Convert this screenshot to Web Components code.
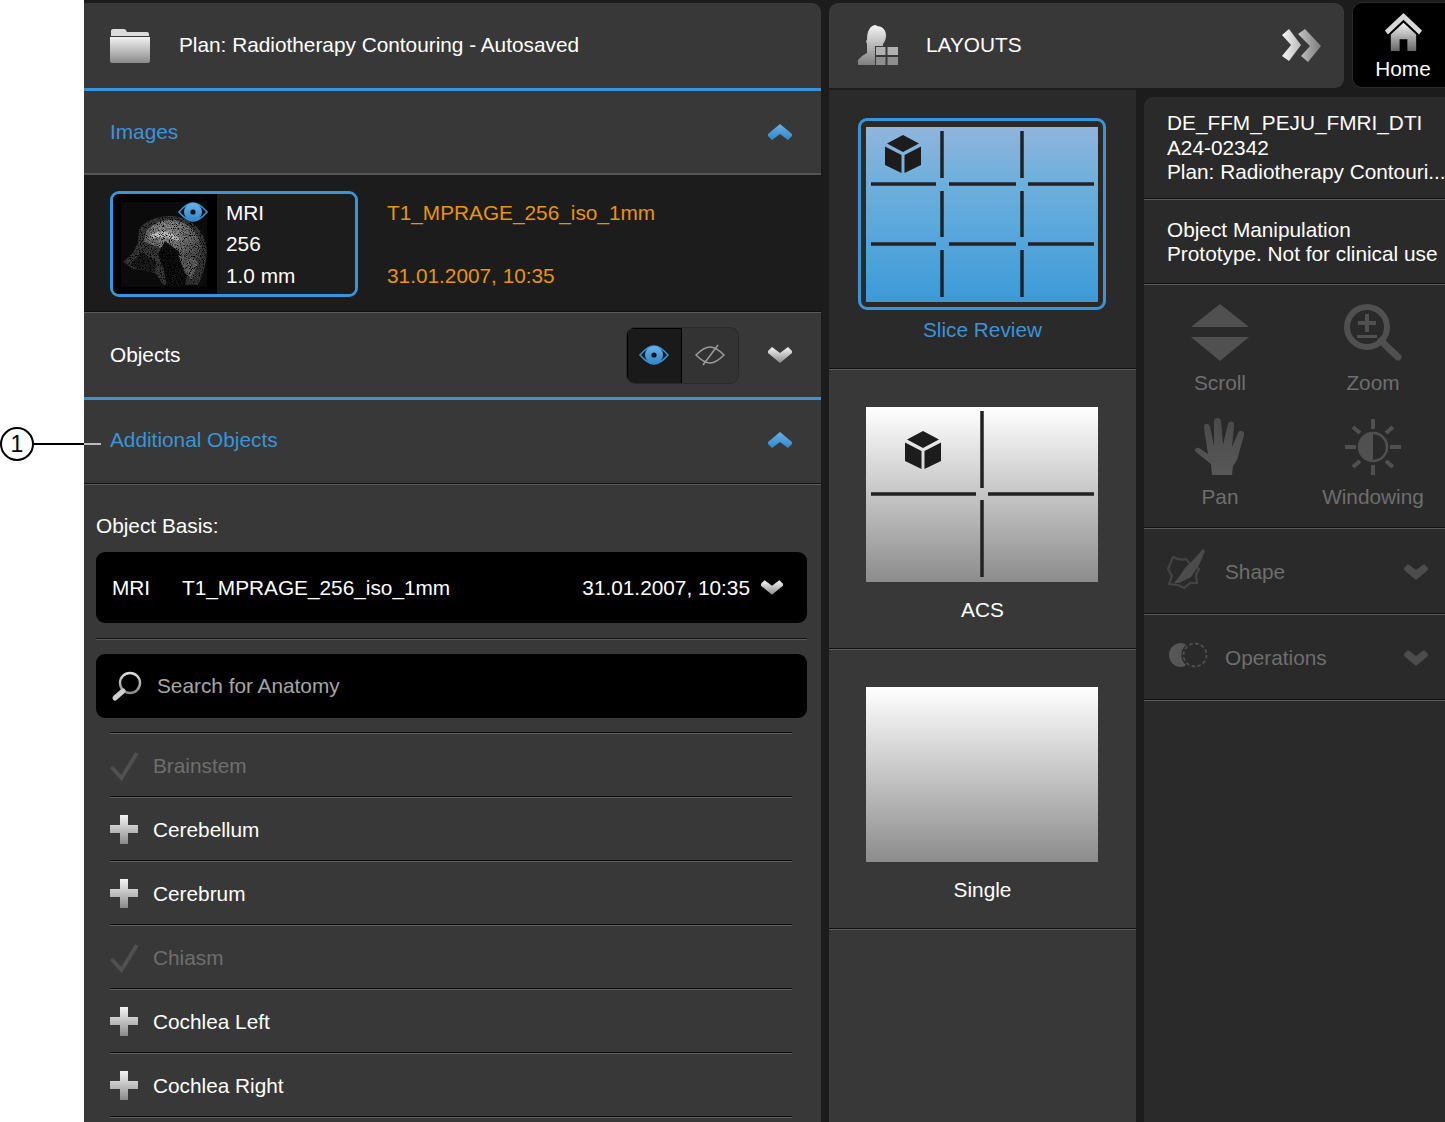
<!DOCTYPE html>
<html><head><meta charset="utf-8">
<style>
html,body{margin:0;padding:0;background:#fff;height:1122px;overflow:hidden}
body{font:20.8px/24px "Liberation Sans",Arial,sans-serif;color:#fff}
</style></head><body>
<app-shell></app-shell>
<script>
const GRAD=(id,a,b,v=true)=>`<linearGradient id="${id}" x1="0" y1="0" x2="${v?0:1}" y2="${v?1:0}"><stop offset="0" stop-color="${a}"/><stop offset="1" stop-color="${b}"/></linearGradient>`;
const ICONS={
folder:[40,36,`<defs>${GRAD('g','#f2f2f2','#8a8a8a')}</defs><path d="M1 7V3q0-2 2-2h11q2 0 3 3h20q2 0 2 2v2H1z" fill="#dcdcdc"/><path d="M0 9h40v24q0 2-2 2H2q-2 0-2-2z" fill="url(#g)"/>`],
person:[41,40,`<defs>${GRAD('g','#f4f4f4','#7e7e7e')}</defs><path d="M18.500 0c6 0 9.500 4 9.500 9.500 0 3-1 6-3 8.500v2h-8v19H0v-5l4-4 5-3v-9l-1-3 1-1c0-9 3-15 9.500-15z" fill="url(#g)"/><path fill="#b0b0b0" d="M18 21h9.500v8H18zM29.500 21H40v8H29.500z"/><path fill="#8e8e8e" d="M18 31h9.500v8H18zM29.500 31H40v8H29.500z"/>`],
dbl:[40,33,`<defs>${GRAD('g','#f6f6f6','#7c7c7c',false)}</defs><path fill="url(#g)" d="M0 6l7-6 12 16-12 16-7-5 9-11zM16 5l7-5 16 17-13 16-7-6 9-10z"/>`],
home:[40,40,`<defs>${GRAD('g','#f4f4f4','#666')}</defs><path fill="#d8d8d8" d="M20 0l19 18-3 4L20 7 4 22l-3-4z"/><path fill="url(#g)" d="M20 10l13 12v17H24V27h-8v12H7V22z"/>`],
up:[24,16,`<defs>${GRAD('g','#6aaee4','#2f8acb')}</defs><path fill="url(#g)" d="M12 0l12 10v2l-4 4-8-6-8 6-4-4v-2z"/>`],
down:[24,16,`<defs>${GRAD('g','#f6f6f6','#8a8a8a')}</defs><path fill="url(#g)" d="M12 16L0 6V4l4-4 8 6 8-6 4 4v2z"/>`],
downdim:[24,16,`<path fill="#4c4c4c" d="M12 16L0 6V4l4-4 8 6 8-6 4 4v2z"/>`],
eye:[30,20,`<defs>${GRAD('g','#69b2ea','#2f86c8')}</defs><path d="M1 10C7 3 11 1 15 1s8 2 14 9c-6 7-10 9-14 9S7 17 1 10z" fill="none" stroke="#3f92d2" stroke-width="1.6"/><circle cx="15" cy="10" r="9" fill="url(#g)"/><circle cx="15" cy="10" r="2.6" fill="#111"/>`],
eyeoff:[30,24,`<path d="M1 12c6-6 10-8 14-8s8 2 14 8c-6 6-10 8-14 8S7 18 1 12z" fill="none" stroke="#9a9a9a" stroke-width="1.5"/><path d="M8 22L23 2" stroke="#9a9a9a" stroke-width="1.5"/>`],
search:[30,30,`<defs>${GRAD('g','#dcdcdc','#8a8a8a')}</defs><circle cx="18" cy="12" r="10" fill="none" stroke="url(#g)" stroke-width="2.4"/><path d="M11 20L3 27" stroke="#cfcfcf" stroke-width="5" stroke-linecap="round"/>`],
check:[28,28,`<path d="M1.500 15l10 11L27 1" fill="none" stroke="#505050" stroke-width="4"/>`],
plus:[28,29,`<defs>${GRAD('g','#f4f4f4','#8a8a8a')}</defs><path fill="url(#g)" d="M10 0h8v10h10v8H18v11h-8V18H0v-8h10z"/>`],
scroll:[58,58,`<path fill="#505050" d="M29 0l29 23H0zM0 33h58L29 57z"/>`],
zoom:[58,58,`<circle cx="23" cy="23" r="20" fill="none" stroke="#505050" stroke-width="6"/><path d="M37 37l17 16" stroke="#505050" stroke-width="7" stroke-linecap="round"/><path fill="#505050" d="M21 10h4v7h7v4h-7v7h-4v-7h-7v-4h7zM13 31h20v3H13z"/>`],
hand:[50,58,`<defs>${GRAD('g','#4a4a4a','#585858')}</defs><path fill="url(#g)" d="M17 57L16 46 1 34C-1 32 1 29 4 30L13 36 9 10C8 5 14 4 15 9L19 28 19 3C19-1 26-1 26 3L28 27 33 6C34 2 40 3 39 7L37 29 43 15C45 11 50 13 49 17L42 42 38 48 37 57z"/>`],
sun:[58,58,`<circle cx="29" cy="29" r="14" fill="none" stroke="#505050" stroke-width="2.500"/><path fill="#505050" d="M29 15a14 14 0 0 0 0 28z"/><path d="M29 1v10M29 47v10M1 29h11M46 29h11M9 9l7 6M49 9l-7 6M9 49l7-6M49 49l-7-6" stroke="#505050" stroke-width="4"/>`],
shape:[40,40,`<path d="M6 8c5 3 9 3 13 2l5 6 8 4-3 6 1 8-7 0-6 5-6-3-9-1 3-8-4-7z" fill="none" stroke="#444" stroke-width="2.200"/><path d="M36 0l2 2-6 14-8 12-6 3c-2 1-6 4-11 3l5-6 6-9 11-11z" fill="#4c4c4c"/>`],
ops:[41,26,`<path d="M14 1a12 12 0 0 0 0 24c2 0 4-1 5-2a13 13 0 0 1 0-20c-1-1-3-2-5-2z" fill="#565656"/><circle cx="28" cy="13" r="11.500" fill="none" stroke="#505050" stroke-width="1.800" stroke-dasharray="3.500 2.500"/>`],
cube:[36,38,`<path fill="currentColor" d="M18 0l16 8.500-16 8.500L2 8.500zM0 11.500l16.500 8.500v18L0 30zM36 11.500L19.500 20v18L36 30z"/>`],
};
function el(name,render,obs=[]){customElements.define(name,class extends HTMLElement{
  connectedCallback(){if(this.shadowRoot)return;this.attachShadow({mode:'open'}).innerHTML=render(this)}
})}
const a=(t,n,d='')=>t.getAttribute(n)??d;

el('app-icon',t=>{const i=ICONS[a(t,'name')];const w=+a(t,'w',i[0]),h=+a(t,'h',i[1]);
return `<style>:host{display:inline-flex;flex:none;line-height:0}svg{display:block;overflow:visible}</style><svg width="${w}" height="${h}" viewBox="0 0 ${i[0]} ${i[1]}">${i[2]}</svg>`});

el('section-head',t=>`<style>
:host{display:flex;align-items:center;justify-content:space-between;box-sizing:border-box;padding:0 29px 0 26px;height:84px;background:#383838;border-bottom:2px solid #555}
:host([line=blue]){height:87px;border-bottom:3px solid #3a94d8}
:host([line=pair]){height:85px;padding-bottom:5px;border-bottom:1px solid #5a5a5a;box-shadow:inset 0 -1px 0 #141414}
:host([blue]) .t{color:#3a94d8}
.r{display:flex;align-items:center;gap:29px}
</style><span class="t"><slot name="title"></slot></span><span class="r"><slot></slot></span>`);

el('image-card',t=>`<style>
:host{display:flex;box-sizing:border-box;width:248px;height:106px;border:3px solid #3a94d8;border-radius:9px;overflow:hidden;flex:none}
.th{width:104px;background:#000;line-height:0;position:relative;flex:none}
.txt{padding-left:9px;display:flex;flex-direction:column;line-height:31.500px;padding-top:2.500px;background:#1c1c1c;flex:1}
app-icon{position:absolute;left:65px;top:8px}
</style><div class="th">
<svg width="104" height="100" viewBox="39 27 312 300"><defs>
<filter id="n" x="0" y="0" width="100%" height="100%"><feTurbulence type="fractalNoise" baseFrequency=".3" numOctaves="2" seed="4" result="t"/><feColorMatrix in="t" values="0 0 0 0 0 0 0 0 0 0 0 0 0 0 0 3.200 0 0 0 -1.250" result="sp"/><feComposite in="sp" in2="SourceGraphic" operator="in" result="m"/><feMerge><feMergeNode in="SourceGraphic"/><feMergeNode in="m"/></feMerge></filter>
<radialGradient id="b" cx=".4" cy=".3" r=".75"><stop offset="0" stop-color="#a0a0a0"/><stop offset="1" stop-color="#4c4c4c"/></radialGradient></defs>
<rect x="63" y="51" width="258" height="254" fill="#0b0b0b"/>
<g filter="url(#n)">
<path d="M210 92c50 2 95 30 108 85 6 40-6 90-24 122H190l-22-32-20-10-50-6-28-21 30-28 14-30 4-38c10-22 48-40 92-42z" fill="#3c3c3c"/>
<path d="M210 104c42 2 80 26 92 74 3 26-2 44-10 56l-44 8-26-30-40-22-50-20 6-30c14-20 42-34 72-36z" fill="url(#b)"/>
<path d="M150 150c30-18 70-10 90 14l-6 5c-24-14-54-17-80-9z" fill="#c8c8c8"/>
<path d="M195 168l40 30 30 60-10 42h-55l-12-58-14-35z" fill="#181818"/>
<path d="M235 212c20-4 50 4 58 24l-18 46-20-18z" fill="#666"/>
<path d="M125 200l45 30-10 35-40-10-30-15z" fill="#222"/></g>
</svg><app-icon name="eye"></app-icon></div><div class="txt"><slot></slot></div>`);

el('eye-toggle',t=>`<style>
:host{display:flex;width:113px;height:57px;border-radius:9px;overflow:hidden;box-sizing:border-box;border:1px solid #2a2a2a;background:#333}
div{flex:1;display:flex;align-items:center;justify-content:center}
.on{background:#1a1a1a;border-right:1px solid #000;flex:none;width:55px;box-shadow:inset 1px 1px 0 #000;padding-right:1px;box-sizing:border-box}
</style><div class="on"><app-icon name="eye"></app-icon></div><div><app-icon name="eyeoff"></app-icon></div>`);

el('black-bar',t=>`<style>
:host{display:flex;align-items:center;background:#000;border-radius:9px;box-sizing:border-box;margin:0 14px 0 12px}
</style><slot></slot>`);

el('anatomy-row',t=>{const off=t.hasAttribute('done');return `<style>
:host{display:flex;align-items:center;box-sizing:border-box;height:64px;margin:0 29px 0 26px;border-top:1px solid #0e0e0e;box-shadow:inset 0 1px 0 #5c5c5c;gap:15px;padding-top:2px}
span{color:${off?'#6e6e6e':'#fff'}}
app-icon{width:28px}
</style><app-icon name="${off?'check':'plus'}"></app-icon><span><slot></slot></span>`});

el('plan-panel',t=>`<style>
:host{display:block;background:#383838;border-radius:0 9px 0 0;overflow:hidden;height:1119px}
.hd{display:flex;align-items:center;box-sizing:border-box;height:88px;border-bottom:3px solid #3a94d8;padding-left:26px;gap:29px}
.hd span{transform:translateY(-1px)}
.imgs{display:flex;box-sizing:border-box;height:138px;background:#1c1c1c;padding:16px 0 0 26px;gap:29px;border-bottom:1px solid #5a5a5a;box-shadow:inset 0 -1px 0 #0c0c0c}
.meta{color:#e6950f;display:flex;flex-direction:column;justify-content:space-between;height:87px;padding-top:10px}
.basis{padding:29px 0 0 12px;height:38px;box-sizing:content-box}
.sep{height:1px;background:#111;border-bottom:1px solid #5a5a5a;margin:15px 14px 14px 12px}
.dd{height:71px;padding:0 24px 0 16px}
.dd .m{width:70px}.dd .n{flex:1}.dd .d{margin-right:11px}
.sr{height:64px;padding-left:16px;gap:15px;margin-bottom:14px;color:#a6a6a6}
</style>
<div class="hd"><app-icon name="folder"></app-icon><span>Plan: Radiotherapy Contouring - Autosaved</span></div>
<section-head blue><span slot="title">Images</span><app-icon name="up"></app-icon></section-head>
<div class="imgs"><image-card><span>MRI</span><span>256</span><span>1.0 mm</span></image-card>
<div class="meta"><span>T1_MPRAGE_256_iso_1mm</span><span>31.01.2007, 10:35</span></div></div>
<section-head line="blue"><span slot="title">Objects</span><eye-toggle></eye-toggle><app-icon name="down"></app-icon></section-head>
<section-head blue line="pair"><span slot="title">Additional Objects</span><app-icon name="up"></app-icon></section-head>
<div class="basis">Object Basis:</div>
<black-bar class="dd"><span class="m">MRI</span><span class="n">T1_MPRAGE_256_iso_1mm</span><span class="d">31.01.2007, 10:35</span><app-icon name="down" w="22" h="15"></app-icon></black-bar>
<div class="sep"></div>
<black-bar class="sr"><app-icon name="search"></app-icon><span>Search for Anatomy</span></black-bar>
<anatomy-row done>Brainstem</anatomy-row>
<anatomy-row>Cerebellum</anatomy-row>
<anatomy-row>Cerebrum</anatomy-row>
<anatomy-row done>Chiasm</anatomy-row>
<anatomy-row>Cochlea Left</anatomy-row>
<anatomy-row>Cochlea Right</anatomy-row>
<anatomy-row></anatomy-row>`);

const segs=(xs,ys)=>xs.map(x=>`M${x[0]} ${x[1]}H${x[2]}`).concat(ys.map(y=>`M${y[0]} ${y[1]}V${y[2]}`)).join('');
el('layout-tile',t=>{const k=a(t,'kind');const sel=k==='slice';
const P={slice:segs([[5,57,70],[83,57,150],[162,57,228],[5,117,70],[83,117,150],[162,117,228]],[[76,4,51],[76,64,110],[76,123,170],[156,4,51],[156,64,110],[156,123,170]]),
acs:segs([[5,87,110],[122,87,228]],[[116,4,81],[116,93,170]]),single:''}[k];
const C={slice:[19,8],acs:[39,24]}[k];
return `<style>
:host{display:flex;flex-direction:column;align-items:center;box-sizing:border-box;height:280px;padding-top:37px;padding-right:1px;background:${sel?'#2a2a2a':'#383838'};border-bottom:1px solid #5a5a5a;box-shadow:inset 0 -1px 0 #111}
.tile{position:relative;width:232px;height:175px;background:${sel?'linear-gradient(#90b4dd,#6fb0dc 30%,#3c9ad9)':'linear-gradient(#fff,#8c8c8c)'};line-height:0}
${sel?'.tile::after{content:"";position:absolute;inset:-9px -8px -8px;border:3px solid #3a94d8;border-radius:9px}':''}
svg{display:block}
app-icon{position:absolute;left:${C?C[0]:0}px;top:${C?C[1]:0}px;color:#1c1c1c}
.l{margin-top:16px;margin-left:1px;color:${sel?'#3a94d8':'#fff'}}
</style><div class="tile"><svg width="232" height="175"><path d="${P}" stroke="#222" stroke-width="3.500" fill="none"/></svg>${C?'<app-icon name="cube"></app-icon>':''}</div><div class="l"><slot></slot></div>`});

el('tool-btn',t=>`<style>
:host{display:flex;flex-direction:column;align-items:center;color:#6e6e6e;height:114px;white-space:nowrap}
.i{height:58px;display:flex;align-items:center;margin-bottom:9px}
</style><div class="i"><app-icon name="${a(t,'icon')}"></app-icon></div><slot></slot>`);

el('tool-head',t=>`<style>
:host{display:flex;align-items:center;box-sizing:border-box;height:86px;padding:0 17px 0 23px;color:#6e6e6e;border-bottom:1px solid #5a5a5a;box-shadow:inset 0 -1px 0 #111}
.i{width:58px}span{flex:1}
</style><div class="i"><app-icon name="${a(t,'icon')}"></app-icon></div><span><slot></slot></span><app-icon name="downdim"></app-icon>`);

el('tool-panel',t=>`<style>
:host{display:block;background:#2a2a2a;border-radius:9px 0 0 0;overflow:hidden;height:100%}
.info{box-sizing:border-box;padding:14px 0 0 23px;line-height:24.500px;white-space:nowrap;border-bottom:1px solid #5a5a5a;box-shadow:inset 0 -1px 0 #111;overflow:hidden}
.i1{height:103px}
.i2{height:85px;padding-top:18px;line-height:24px}
.grid{display:grid;grid-template-columns:152px 154px;height:244px;box-sizing:border-box;padding-top:19px;border-bottom:1px solid #5a5a5a;box-shadow:inset 0 -1px 0 #111}
</style>
<div class="info i1">DE_FFM_PEJU_FMRI_DTI<br>A24-02342<br>Plan: Radiotherapy Contouri...</div>
<div class="info i2">Object Manipulation<br>Prototype. Not for clinical use</div>
<div class="grid"><tool-btn icon="scroll">Scroll</tool-btn><tool-btn icon="zoom">Zoom</tool-btn><tool-btn icon="hand">Pan</tool-btn><tool-btn icon="sun">Windowing</tool-btn></div>
<tool-head icon="shape">Shape</tool-head><tool-head icon="ops">Operations</tool-head>`);

el('app-callout',t=>`<style>
:host{position:absolute;left:0;top:427px;width:101px;height:33px;display:block}
.c{position:absolute;left:0;top:0;width:30px;height:30px;border:2px solid #000;border-radius:50%;background:#fff;color:#000;text-align:center;line-height:30px;font-size:23px}
.l{position:absolute;left:33px;top:15.500px;width:51px;height:2px;background:#000}
.r{position:absolute;left:84px;top:15.500px;width:17px;height:2px;background:#bbb}
</style><div class="c">1</div><div class="l"></div><div class="r"></div>`);

el('app-shell',t=>`<style>
:host{display:grid;box-sizing:border-box;position:relative;width:1445px;height:1122px;overflow:hidden;background:linear-gradient(90deg,#fff 84px,#1c1c1c 84px);padding:3px 0 0 84px;grid-template-columns:737px 1fr;column-gap:8px}
.c{display:grid;grid-template-columns:307px 301px;grid-template-rows:87px 1fr;column-gap:8px}
.lh{grid-column:1/3;display:flex;gap:9px;height:85px}
.lay{flex:none;width:515px;height:85px;background:#383838;display:flex;align-items:center;padding:0 22px 0 29px;box-sizing:border-box;gap:27px;border-radius:9px 9px 9px 0}
.lay span{flex:1;transform:translateY(-1px)}
.home{flex:1;background:#000;border-radius:9px 0 0 9px;display:flex;flex-direction:column;align-items:center;padding:10px 0 0 8px;box-sizing:border-box;color:#fff;gap:6px;line-height:22px;height:84px;box-shadow:0 0 0 1px #2a2a2a}
.lst{background:#383838;height:1032px;overflow:hidden}
.tp{padding-top:7px;height:1032px;box-sizing:border-box}
</style>
<plan-panel></plan-panel>
<div class="c"><div class="lh"><div class="lay"><app-icon name="person"></app-icon><span>LAYOUTS</span><app-icon name="dbl"></app-icon></div>
<div class="home"><app-icon name="home" h="39" w="39"></app-icon>Home</div></div>
<div class="lst"><layout-tile kind="slice">Slice Review</layout-tile><layout-tile kind="acs">ACS</layout-tile><layout-tile kind="single">Single</layout-tile></div>
<div class="tp"><tool-panel></tool-panel></div></div>
<app-callout></app-callout>`);
</script>
</body></html>
